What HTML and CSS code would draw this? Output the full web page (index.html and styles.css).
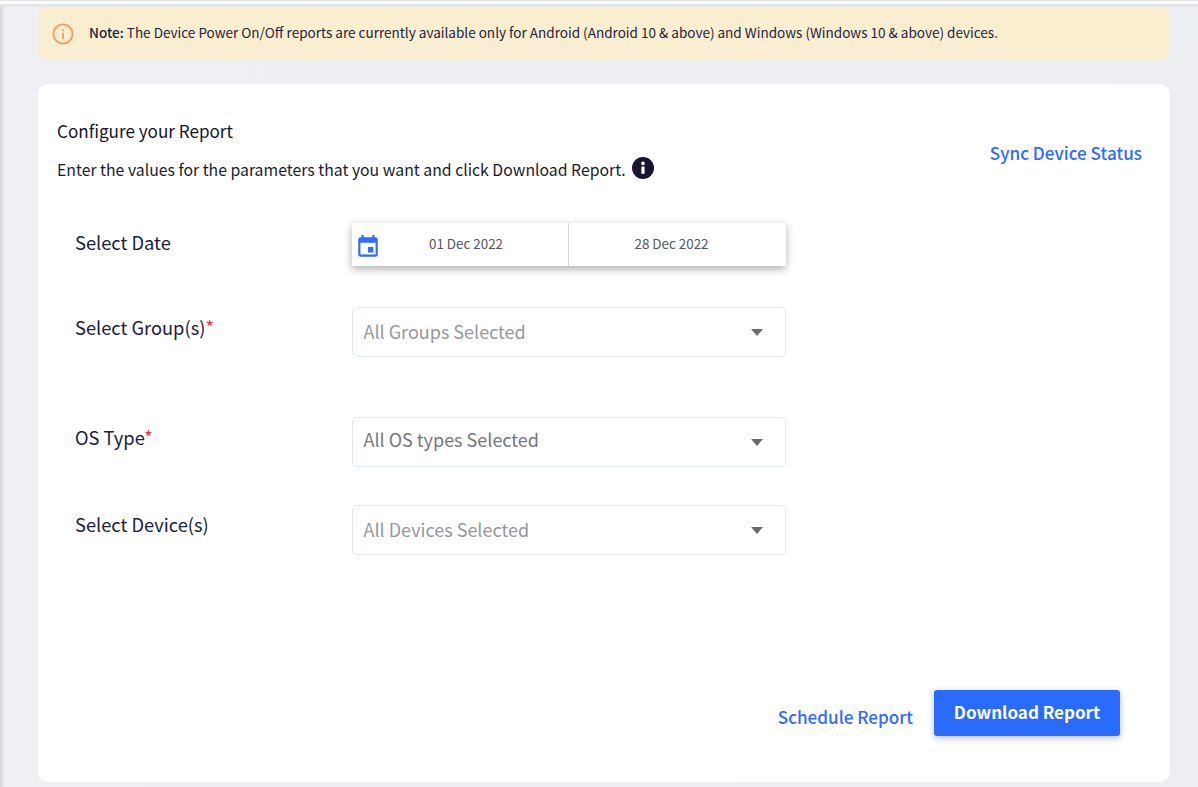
FILE: index.html
```html
<!DOCTYPE html>
<html lang="en">
<head>
<meta charset="utf-8">
<title>Configure your Report</title>
<link rel="stylesheet" href="styles.css">
</head>
<body>
<div class="page">
  <div class="notice">
    <svg class="notice-icon" width="22" height="22" viewBox="0 0 22 22" aria-hidden="true">
      <circle cx="11" cy="11" r="9.6" fill="none" stroke="#f0a05c" stroke-width="1.9"/>
      <rect x="10.1" y="9.8" width="1.8" height="6" fill="#f0a05c"/>
      <rect x="10.1" y="6.2" width="1.8" height="2" fill="#f0a05c"/>
    </svg>
    <p class="notice-text"><strong>Note:</strong> The Device Power On/Off reports are currently available only for Android (Android 10 &amp; above) and Windows (Windows 10 &amp; above) devices.</p>
  </div>
  <main class="card">
    <header class="card-head">
      <div class="head-copy">
        <h1 class="title">Configure your Report</h1>
        <p class="desc">Enter the values for the parameters that you want and click Download Report.
          <svg class="info" width="22" height="22" viewBox="0 0 22 22" aria-hidden="true">
            <circle cx="11" cy="11" r="11" fill="#1a1433"/>
            <rect x="9.4" y="9.4" width="3.2" height="7.4" rx="0.4" fill="#fff"/>
            <circle cx="11" cy="6.4" r="1.8" fill="#fff"/>
          </svg>
        </p>
      </div>
      <a class="link sync" href="#">Sync Device Status</a>
    </header>
    <div class="form">
      <div class="row row-date">
        <div class="label">Select Date</div>
        <div class="date">
          <svg class="cal" width="26" height="26" viewBox="0 0 24 24" aria-hidden="true">
            <path fill="#2b6bff" d="M17 12h-5v5h5v-5zM16 1v2H8V1H6v2H5c-1.100 0-2 .9-2 2v14c0 1.100.9 2 2 2h14c1.100 0 2-.9 2-2V5c0-1.100-.9-2-2-2h-1V1h-2zm3 18H5V8h14v11z"/>
          </svg>
          <div class="date-cell date-from">01 Dec 2022</div>
          <div class="date-cell date-to">28 Dec 2022</div>
        </div>
      </div>
      <div class="row row-groups">
        <div class="label">Select Group(s)<span class="req">*</span></div>
        <div class="select"><span>All Groups Selected</span><i class="caret"></i></div>
      </div>
      <div class="row row-os">
        <div class="label">OS Type<span class="req">*</span></div>
        <div class="select select-dark"><span>All OS types Selected</span><i class="caret"></i></div>
      </div>
      <div class="row row-device">
        <div class="label">Select Device(s)</div>
        <div class="select"><span>All Devices Selected</span><i class="caret"></i></div>
      </div>
    </div>
    <footer class="actions">
      <a class="link schedule" href="#">Schedule Report</a>
      <button class="primary" type="button">Download Report</button>
    </footer>
  </main>
</div>
</body>
</html>
```
FILE: styles.css
```css
* { box-sizing: border-box; }
html, body { margin: 0; height: 100%; overflow: hidden; }
body {
  background: #eceef2;
  border-top: 1px solid #e4e4e7;
  font-family: "Noto Sans CJK SC", "Source Sans Pro", "Noto Sans", sans-serif;
  color: #1a1a2e;
}
.page {
  height: 786px;
  padding: 3px 28px 0 38px;
  border-top: 3px solid #fff;
  background:
    linear-gradient(180deg, #dfe0e4 0, rgba(236, 238, 242, 0) 4px),
    linear-gradient(90deg, #d4d5da 0, #eef0f3 5px, #eceef2 100%);
}
.notice {
  height: 52px;
  display: flex;
  align-items: center;
  gap: 15px;
  padding-left: 14px;
  background: #f9eecf;
  border-radius: 8px;
}
.notice-icon { flex: none; margin-top: 1px; }
.notice-text { margin: -2px 0 0; font-size: 13.54px; line-height: 20px; color: #1f2340; }
.notice-text strong { font-weight: 500; }
.card {
  height: 698px;
  margin-top: 25px;
  padding: 36px 28px 46px 19px;
  background: #fff;
  border-radius: 10px;
  display: flex;
  flex-direction: column;
}
.card-head { display: flex; justify-content: space-between; align-items: center; height: 62px; }
.head-copy { margin-top: -2px; }
.title { margin: 0; font-size: 17.1px; line-height: 22px; font-weight: 400; color: #14142b; }
.desc { margin: 17px 0 0; font-size: 15.8px; line-height: 22px; color: #1a1a2e; display: flex; align-items: center; gap: 6px; }
.info { flex: none; margin-top: -3px; }
.link { color: #2e6bff; font-size: 17.1px; line-height: 22px; font-weight: 500; text-decoration: none; }
.sync { margin-top: 3px; }
.form { padding: 41px 0 0 18px; flex: 1; }
.row { display: flex; align-items: flex-start; }
.label { width: 277px; font-size: 18.3px; line-height: 24px; color: #20203a; }
.req { color: #e0323c; }
.row-date { height: 43px; }
.row-date .label { margin-top: 7px; }
.row-groups { margin-top: 41px; }
.row-groups .label { margin-top: 8px; }
.row-os { margin-top: 60px; }
.row-os .label { margin-top: 8px; }
.row-device { margin-top: 38px; }
.row-device .label { margin-top: 7px; }
.date {
  width: 434px;
  height: 43px;
  display: flex;
  align-items: center;
  background: #fff;
  box-shadow: 0 3px 8px rgba(0, 0, 0, 0.32);
  font-size: 13.4px;
  color: #55555f;
}
.cal { flex: none; margin: 5px 0 0 3px; }
.date-cell { height: 100%; display: flex; align-items: center; justify-content: center; padding-bottom: 3px; }
.date-from { width: 188px; border-right: 1px solid #d5d5d8; padding-right: 17px; }
.date-to { flex: 1; padding-right: 12px; }
.select {
  width: 434px;
  height: 50px;
  display: flex;
  align-items: center;
  justify-content: space-between;
  padding: 0 22px 0 10.5px;
  border: 1px solid #dfe6fb;
  border-radius: 5px;
  font-size: 18px;
  line-height: 24px;
  color: #98989d;
}
.select-dark { color: #77777d; }
.select span { display: block; margin-top: -2px; }
.select-dark span { margin-top: -6px; }
.caret {
  display: block;
  width: 0;
  height: 0;
  border-left: 6.5px solid transparent;
  border-right: 6.5px solid transparent;
  border-top: 7px solid #6b6b70;
}
.actions { display: flex; justify-content: flex-end; align-items: center; gap: 21px; padding-right: 22px; }
.schedule { margin-top: 8px; }
.primary {
  width: 186px;
  height: 46px;
  border: 0;
  border-radius: 3px;
  padding: 0 0 3px;
  background: #2a6bff;
  color: #fff;
  font: 700 17px/24px "Noto Sans CJK SC", sans-serif;
  box-shadow: 0 2px 6px rgba(0, 0, 0, 0.28);
}
```
